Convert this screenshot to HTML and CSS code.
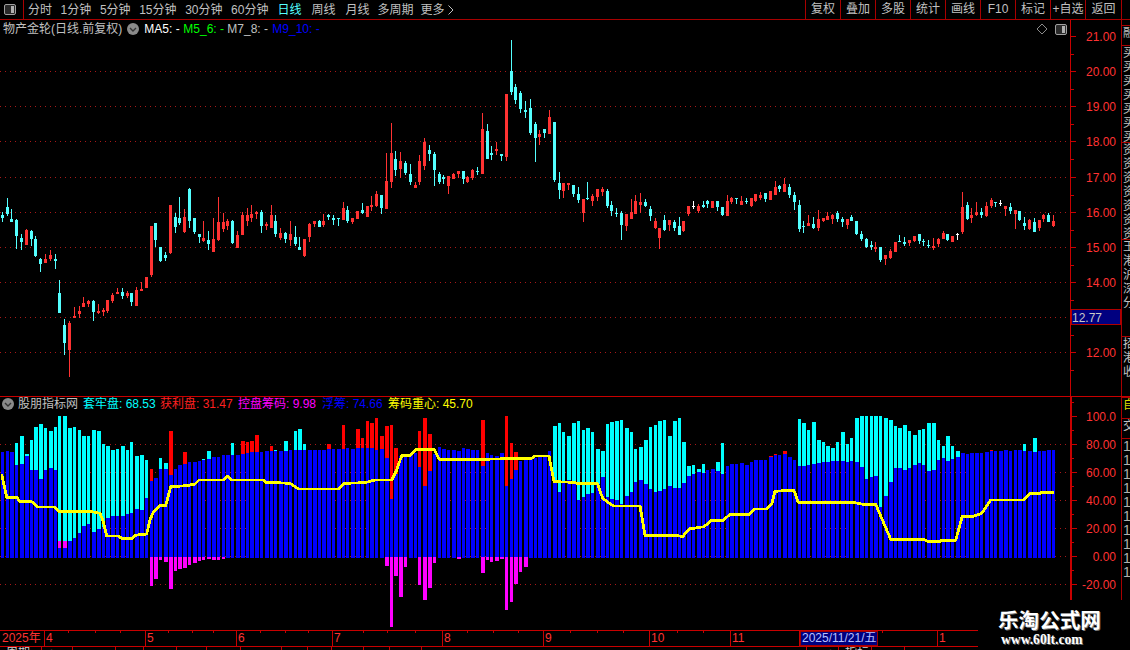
FILE: index.html
```html
<!DOCTYPE html>
<html lang="zh">
<head>
<meta charset="utf-8">
<title>物产金轮 日线</title>
<link rel="stylesheet" href="styles.css">
</head>
<body>
<div class="app">
  <header class="topbar">
    <div class="toggle-box">
      <svg class="toggle" viewBox="0 0 12 11"><rect x="0.5" y="0.5" width="11" height="10" rx="1.5" class="toggle-frame"/><rect x="7" y="2" width="3" height="7" class="toggle-fill"/></svg>
    </div>
    <nav class="periods">
      <div class="period-group minutes"><span>分时</span><span>1分钟</span><span>5分钟</span><span>15分钟</span><span>30分钟</span><span>60分钟</span></div>
      <div class="period-group days"><span class="active">日线</span><span>周线</span><span>月线</span></div>
      <div class="period-group more"><span>多周期</span><span>更多<svg class="chev" viewBox="0 0 6 10"><path d="M0.5 0.5 5 5 0.5 9.5"/></svg></span></div>
    </nav>
    <nav class="tools">
      <span>复权</span><span>叠加</span><span>多股</span><span>统计</span><span>画线</span><span>F10</span><span>标记</span><span>+自选</span><span class="last">返回</span>
    </nav>
  </header>

  <section class="pane pane-main">
    <div class="plot">
      <svg id="mainChart" class="chart" width="1121" height="376" viewBox="0 20 1121 376"></svg>
      <div class="legend legend-main">
        <span class="name">物产金轮(日线.前复权)</span>
        <svg class="roundicon" viewBox="0 0 12 12"><circle cx="6" cy="6" r="6"/><path d="M3 5 6 8 9 5"/></svg>
        <span class="ma1">MA5: -</span><span class="ma2">M5_6: -</span><span class="ma3">M7_8: -</span><span class="ma4">M9_10: -</span>
      </div>
      <svg class="diamond" viewBox="0 0 12 12"><path d="M6 1 11 6 6 11 1 6Z"/></svg>
      <svg class="toggle toggle-chart" viewBox="0 0 12 11"><rect x="0.5" y="0.5" width="11" height="10" rx="1.5" class="toggle-frame"/><rect x="7" y="2" width="3" height="7" class="toggle-fill"/></svg>
    </div>
    <aside class="side side-main" id="sideMain"></aside>
  </section>

  <section class="pane pane-ind">
    <div class="plot">
      <svg id="indChart" class="chart" width="1121" height="233" viewBox="0 397 1121 233"></svg>
      <div class="legend legend-ind">
        <svg class="roundicon" viewBox="0 0 12 12"><circle cx="6" cy="6" r="6"/><path d="M3 5 6 8 9 5"/></svg>
        <span class="name">股朋指标网</span>
        <span class="c-cyan">套牢盘: 68.53</span><span class="c-red">获利盘: 31.47</span><span class="c-mag">控盘筹码: 9.98</span><span class="c-blue">浮筹: 74.66</span><span class="c-yel">筹码重心: 45.70</span>
      </div>
    </div>
    <aside class="side side-ind" id="sideInd"></aside>
  </section>

  <footer class="timeaxis">
    <div class="months" id="months"></div>
    <div class="subrow" id="subrow"></div>
  </footer>

  <div class="watermark">
    <div class="wm-title">乐淘公式网</div>
    <div class="wm-url">www.60lt.com</div>
  </div>
</div>
<script src="app.js"></script>
</body>
</html>
```
FILE: styles.css
```css
* { box-sizing: border-box; }
html, body { margin: 0; padding: 0; background: #000; }
body { font: 12px/1 "Liberation Sans", "Noto Sans CJK SC", sans-serif; color: #c0c0c0; overflow: hidden; }
.app { position: relative; width: 1130px; height: 650px; overflow: hidden; display: flex; flex-direction: column; }

.topbar { height: 20px; flex: none; display: flex; align-items: stretch; border-bottom: 1px solid #a80000; }
.toggle-box { width: 24px; flex: none; border-right: 1px solid #a80000; display: flex; align-items: center; padding-left: 4px; }
.toggle { width: 12px; height: 11px; display: block; }
.toggle-frame { fill: #2a2a2a; stroke: #a0a0a0; stroke-width: 1; }
.toggle-fill { fill: #b0b0b0; }

.periods { display: flex; align-items: center; padding-left: 4px; white-space: nowrap; }
.period-group { display: flex; }
.minutes { gap: 8.6px; }
.days { gap: 10px; margin-left: 9px; }
.more { gap: 7px; margin-left: 8px; }
.periods .active { color: #54ffff; }
.chev { width: 6px; height: 10px; margin-left: 3px; vertical-align: -1px; fill: none; stroke: #c0c0c0; stroke-width: 1; }

.tools { margin-left: auto; margin-right: 8px; display: flex; }
.tools span { width: 35px; text-align: center; line-height: 19px; border-left: 1px solid #a80000; }
.tools .last { width: 37px; border-right: 1px solid #a80000; }

.pane { flex: none; display: flex; }
.pane-main { height: 377px; border-bottom: 1px solid #c80000; }
.pane-ind { height: 233px; }
.plot { position: relative; width: 1121px; flex: none; }
.chart { display: block; }

.legend { position: absolute; display: flex; align-items: center; white-space: nowrap; line-height: 14px; }
.legend-main { left: 3px; top: 2px; height: 14px; }
.legend-ind { left: 2px; top: 0; height: 14px; }
.roundicon { width: 12px; height: 12px; flex: none; }
.roundicon circle { fill: #8a8a8a; }
.roundicon path { fill: none; stroke: #333; stroke-width: 1.4; }
.legend-main .roundicon { margin: 0 5px 0 5px; }
.legend-ind .roundicon { margin-right: 4px; }
.legend .ma1 { color: #fff; width: 39px; }
.legend .ma2 { color: #00ff00; width: 44px; }
.legend .ma3 { color: #c0c0c0; width: 45px; }
.legend .ma4 { color: #0000ff; }
.legend .c-cyan { color: #00ffff; margin-left: 5px; width: 77px; }
.legend .c-red { color: #ff2020; width: 78px; }
.legend .c-mag { color: #ff00ff; width: 84px; }
.legend .c-blue { color: #0000ff; width: 66px; }
.legend .c-yel { color: #ffff00; }

.diamond { position: absolute; left: 1036px; top: 3px; width: 12px; height: 12px; fill: none; stroke: #8a8a8a; stroke-width: 1; }
.toggle-chart { position: absolute; left: 1055px; top: 4px; }

.side { width: 9px; flex: none; display: flex; flex-direction: column; overflow: hidden; border-left: 1px solid #a80000; }
.side-cell { border-top: 1px solid #a80000; overflow: hidden; padding-left: 1px; flex: none; }
.side-cell.blank { border-top: 0; }
.side-cell div { height: 14px; line-height: 14px; width: 14px; font-size: 12px; }
.side-cell.note { color: #dcdc00; }
.side-main { height: 376px; }
.side-ind { height: 203px; }
.side-nums div { font-size: 14px; color: #b0b0b0; }

/* chart marks */
.grid { stroke: #a81818; stroke-width: 1; stroke-dasharray: 1 4; shape-rendering: crispEdges; fill: none; }
.wick-r { fill: #ff3232; }
.wick-c, .body-c { fill: #54ffff; }
.wick-w, .body-w { fill: #ffffff; }
.body-r { fill: none; stroke: #ff3232; stroke-width: 1; shape-rendering: crispEdges; }
.crisp { shape-rendering: crispEdges; }
.bar-c { fill: #00ffff; }
.bar-r { fill: #ff0000; }
.bar-m { fill: #ff00ff; }
.bar-b { fill: #0000ff; }
.avg { fill: none; stroke: #ffff00; stroke-width: 2.8; shape-rendering: crispEdges; stroke-linejoin: round; }
.axis-thin { stroke: #c80000; stroke-width: 1; shape-rendering: crispEdges; }
.axis-thick { stroke: #c80000; stroke-width: 2; shape-rendering: crispEdges; }
.label { fill: #ff3232; font: 12px "Liberation Sans", sans-serif; text-anchor: end; }
.price-box { fill: #000080; stroke: #b00000; stroke-width: 1; shape-rendering: crispEdges; }
.price-text { fill: #c8c8c8; font: 12px "Liberation Sans", sans-serif; }

/* time axis */
.timeaxis { position: relative; height: 20px; flex: none; border-top: 1px solid #c80000; }
.months { display: flex; height: 16px; border-bottom: 1px solid #c80000; }
.month { flex: none; color: #ff3232; line-height: 15px; padding-left: 1px; border-right: 1px solid #c80000; white-space: nowrap; overflow: hidden; }
.month.first { padding-left: 2px; }
.month.current { background: #000080; color: #b8c0ff; outline: 1px solid #a00000; outline-offset: -1px; padding-left: 2px; }
.tick { position: absolute; top: 0; width: 1px; height: 2px; background: #c80000; }
.subrow { display: flex; height: 3px; overflow: hidden; }
.subcell { flex: none; border-right: 1px solid #c80000; line-height: 12px; padding-left: 6px; color: #d0d0d0; white-space: nowrap; overflow: hidden; }
.subcell.tail { padding-left: 20px; }

/* overlay */
.watermark { position: absolute; left: 978px; top: 600px; width: 152px; height: 50px; background: #000; display: flex; flex-direction: column; align-items: flex-start; padding-left: 20px; }
.wm-title { margin-top: 8px; font: 700 20.6px/22px "Noto Sans CJK SC", sans-serif; color: #fff; text-shadow: 1px 1px 0 #777; white-space: nowrap; }
.wm-url { margin: 2px 0 0 3px; font: 700 13.6px/16px "Liberation Serif", serif; color: #fff; text-shadow: 1px 1px 0 #666; white-space: nowrap; }
```
FILE: app.js
```js
(function () {
  // ---------- Daily candles: type + hi,top,bottom,lo, in 3x pixel units from a y origin ----------
  var candleSegs = [
    [190, "c68,75,84,98 c25,52,72,78 c57,87,96,96 c87,90,138,177 c133,144,156,180 r118,120,165,165 c120,123,147,168 c139,147,199,201 c205,207,222,246 r193,207,219,219 r180,195,207,213 c193,207,213,237 c270,309,369,369 c387,405,459,495 r393,399,480,561 r351,378,381,381 r348,363,372,384 r321,339,351,351 r330,333,342,351 c330,333,366,393 r342,363,369,372 r354,360,366,378 r330,330,363,369 r309,315,333,339 r294,306,312,312 c294,306,318,327 r303,309,318,324 c309,309,336,348 r291,300,348,348 r276,297,303,303 r261,261,294,294 r108,108,255,261 c99,99,150,171 c171,171,213,216 c186,195,204,213 r45,45,189,192 c69,81,111,129 c21,84,99,105 r57,81,126,129 c-6,-3,93,114 c84,84,126,132 c132,132,141,159 r93,144,153,156 c123,150,162,180 r84,147,186,186 r21,96,150,153 r69,96,117,126 r87,93,108,120 c90,93,159,162 r123,135,174,174"],
    [40, "r516,525,585,585 r504,525,543,558 r495,522,534,546 r513,516,522,537 c510,516,558,579 r546,552,558,570 r495,525,564,564 c525,543,582,591 r564,579,594,600 c576,579,597,609 r543,582,600,618 c558,591,612,618 c591,621,630,630 r597,597,648,651 r549,552,591,606 r543,543,552,561 c540,543,561,561 r522,543,555,561 c522,525,531,540 c525,534,540,555 c534,534,537,558 r486,504,540,540 c498,510,543,549 r534,534,546,552 r513,513,537,537 c489,510,519,522 r498,498,531,531 r468,495,501,513 r453,462,498,501 c465,465,504,522 r339,423,507,507 r249,339,426,444 c333,357,390,408 r336,363,387,414 c363,369,399,405 c372,402,426,435 r426,435,444,444 r345,363,426,435 r294,306,378,390 c315,330,342,363 c336,342,390,438 c396,402,426,432 c405,411,417,432 r408,408,438,462 r399,402,417,417 r393,393,402,414 c393,393,417,432 r408,411,426,429 r387,390,414,420 c381,393,396,405 r219,267,402,402 c252,273,357,357 c318,339,345,360 r306,327,333,345 c342,342,348,363 r162,162,351,363 c0,93,156,165 c132,141,180,192 c153,159,207,219 c183,210,216,234 c177,204,279,285 c246,252,294,366 r270,282,291,315 c267,267,279,294 r210,231,282,282 c246,246,420,426 c396,429,450,477"],
    [160, "r69,69,93,114 r69,69,75,90 c75,75,102,111 c81,102,120,129 r117,117,159,186 c66,114,117,120 r102,108,123,138 r87,87,111,123 r81,87,96,108 c87,93,138,144 c123,135,153,168 c144,159,162,171 c153,159,195,240 r162,162,198,213 r117,156,177,177 r105,123,162,162 r99,126,135,159 c117,126,138,141 c138,147,168,183 r174,183,204,207 r204,204,234,267 c165,180,210,213 r180,180,195,213 c180,186,204,213 c171,198,225,225 r183,183,213,216 r138,138,162,168 w123,138,141,147 r132,138,153,159 c123,135,141,144 c120,123,132,144 r123,123,144,144 c123,123,141,153 c141,141,165,168 r105,123,168,168 r111,114,126,132 c114,114,117,132 r108,123,135,135 c114,123,126,132 r114,114,138,141 r102,102,123,126 r96,105,114,120 c99,99,117,126 r93,93,120,120 r63,81,105,105 c75,78,87,96 r54,72,96,96 c72,81,105,114 c96,105,126,150 c120,135,207,216 c183,198,201,219 r165,189,198,198 c171,192,204,207 r150,177,204,213 r174,174,183,186 r156,168,180,180 r162,165,177,192 c153,159,177,186 c171,177,186,201 r177,177,195,207 c165,171,183,183 c183,183,222,225 c213,222,237,243 c234,237,261,264 c243,255,261,270 r246,261,264,276 c261,261,300,306 r285,285,297,315 r267,273,294,297 r246,246,276,276 c225,243,246,246 c231,246,252,258 r240,240,249,258 r228,228,243,246 c222,222,243,252 c237,243,246,258 c240,255,258,264 r234,258,264,270 r234,237,252,261 r213,219,237,237 c222,222,240,243 r228,228,246,246 w219,222,225,240 r96,141,216,222 c126,135,177,180 r144,165,174,189 r126,156,165,168 c144,156,165,174 r126,138,168,171 r114,120,138,144 c126,126,129,141 w120,129,132,138 r138,138,147,168 c129,141,153,162 r150,150,162,207 c153,153,180,183 c171,189,198,210 r177,180,207,210 c174,186,216,216 r180,180,204,213 r162,165,177,186 c159,165,186,186 r165,183,198,201"]
  ];

  // ---------- Indicator bars: blue top, or colour+colourTop,blueTop ----------
  var barSegs = [
    [390, "186 184 188 c160,225 c138,222 c192,200 c150,240 c113,240 c102,268 c116,240 c125,234 c113,242 c78,474 c80,474 c115,453 c113,444 c122,429 c138,408 c140,402 c122,426 c125,417 c163,411 c170,384 c180,378 c177,378 c168,378 c180,372 c157,369 c200,357 c197,360 c210,324 r238,273 265 c205,238 c220,238 r124,255 238 225 r187,222 216 217 215 c208,212 c184,207 203 201 197 197 c160,197 195 r153,192 r157,190 r153,188 r135,187 187 185 r168,185 c180,184 184 c153,183 182 c124,180 c117,180 c162,180 180 181 180 180 r164,177 178 177 r105,177 176 177 r117,175 r145,175 r95,174 r100,174 r85,180 r140,178 r110,205 r105,327 r175,253 200 197 193 190 r125,233 r85,288 r132,245 193 172 178 181 180 183 175 178 182 180"],
    [390, "r90,228 190 196 198 190 r78,290 r160,268 r186,240 215 210 208 205 200 195 183 c108,278 c100,306 c127,277 c138,270 c100,280 c94,332 c120,322 c115,313 c126,310 c178,283 c183,262 c104,322 c96,327 c94,330 c90,342 c115,320 c127,308 c178,277 c173,272 c150,282 c113,297 c106,307 c93,303 c90,298 c138,290 c95,296 c85,296 c158,280 c228,258 c226,252 c238,248 c223,250 240 237 c216,245 c160,252 228 222 224 221 225 218 210 212 212 r198,202 r192,197 197 r184,192 202 210"],
    [400, "c57,200 c70,198 c90,195 c66,192 c120,190 c128,186 c138,186 c145,183 c127,183 c96,183 c133,187 c114,183 c55,186 c50,203 c48,238 c48,232 c48,230 c48,322 c54,288 c60,248 c80,205 c85,205 c76,212 c93,205 c106,195 c90,190 c88,197 c70,215 c70,212 c120,180 c140,175 c110,185 c140,178 c155,173 160 163 160 160 160 157 r152,155 154 155 150 153 150 152 c132,155 155 c115,158 154 153 151 150"]
  ];

  var negs = [
    [520, { 31:198,32:177,33:120,34:126,35:207,36:155,37:147,38:144,39:137,40:131,41:125,42:122,43:117,44:120,45:120,46:117,80:140,81:323,82:170,83:231,84:143,87:195,88:240,89:204,90:129,95:117 }],
    [390, { 100:551,101:512,102:516,103:515,104:507,105:662,106:636,107:582,108:548,109:533 }]
  ];

  // ---------- Cost-centre line: x origin, y origin, points at 3x ----------
  var avgSegs = [
    [0, 390, [5,253, 20,322, 50,322, 60,335, 95,335, 112,351, 165,351, 175,364, 270,364, 300,370, 310,395]],
    [0, 520, [320,48, 355,48, 365,55, 398,55, 405,46, 440,42, 450,0]],
    [0, 390, [458,370, 480,347, 497,347, 512,290, 560,287, 585,282, 597,270, 670,270, 682,258, 695,270, 790,270, 797,277, 870,280, 895,297, 1015,297, 1032,280, 1095,278, 1125,270, 1175,270, 1190,240, 1205,197, 1230,197, 1247,178, 1302,178, 1318,208, 1440,208]],
    [480, 390, [155,205, 165,198, 207,198, 222,275, 285,277, 290,280, 352,280, 368,325, 400,348, 480,348, 495,436, 590,436, 608,440, 627,417, 672,410, 695,391, 730,391, 750,373, 808,373, 825,357, 860,357, 875,342, 885,304]],
    [780, 400, [15,272, 42,272, 55,307, 220,307, 250,313, 287,313, 332,418, 432,418, 445,425, 480,425, 484,421, 527,421, 547,349, 578,349, 605,340, 632,300, 730,300, 752,280, 780,280, 785,277, 822,277]]
  ];

  function rect(cls, x, y, w, h) {
    return '<rect class="' + cls + '" x="' + x + '" y="' + y + '" width="' + w + '" height="' + Math.max(h, 1) + '"/>';
  }
  function line(cls, x1, y1, x2, y2) {
    return '<line class="' + cls + '" x1="' + x1 + '" y1="' + y1 + '" x2="' + x2 + '" y2="' + y2 + '"/>';
  }
  function cx(i) { return Math.floor(2.3 + 4.8 * i); }

  // ---------- Main chart ----------
  var m = '';
  [71, 106, 141, 177, 212, 247, 282, 317, 352].forEach(function (y) {
    m += line('grid', 0, y + 0.5, 1070, y + 0.5);
  });

  var idx = 0;
  candleSegs.forEach(function (seg) {
    seg[1].split(' ').forEach(function (tok) {
      var t = tok.charAt(0);
      var v = tok.slice(1).split(',').map(function (n) { return Math.floor(seg[0] + Number(n) / 3); });
      var x = cx(idx);
      if (v[3] > v[0]) m += rect('crisp wick-' + t, x, v[0], 1, v[3] - v[0]);
      if (t === 'r') {
        m += '<rect class="body-r" x="' + (x - 0.5) + '" y="' + (v[1] + 0.5) + '" width="2" height="' + Math.max(v[2] - v[1] - 1, 1) + '"/>';
      } else {
        m += rect('crisp body-' + t, x - 1, v[1], 3, v[2] - v[1]);
      }
      idx++;
    });
  });

  // axis
  m += line('axis-thin', 1070.5, 20, 1070.5, 396);
  [[21, 36], [20, 71], [19, 106], [18, 141], [17, 177], [16, 212], [15, 247], [14, 282], [13, 317], [12, 352]].forEach(function (p) {
    m += line('axis-thin', 1071, p[1] + 0.5, 1076, p[1] + 0.5);
    m += line('axis-thin', 1071, p[1] + 18, 1074, p[1] + 18);
    if (p[0] !== 13) m += '<text class="label" x="1116" y="' + (p[1] + 5) + '">' + p[0] + '.00</text>';
  });
  m += '<rect class="price-box" x="1071.5" y="309.5" width="49" height="15"/>';
  m += '<text class="price-text" x="1072" y="322">12.77</text>';
  document.getElementById('mainChart').innerHTML = m;

  // ---------- Indicator chart ----------
  var s = '';
  [444, 472, 500, 528, 556, 584].forEach(function (y) {
    s += line('grid', 0, y + 0.5, 1070, y + 0.5);
  });

  var bi = 0;
  function bx(i) { return Math.floor(1.2 + 4.8 * i + 0.001); }
  function bw(i) { return Math.min(bx(i + 1) - bx(i) - 1, i % 3 === 0 ? 3 : 4); }
  var BASE = 558;
  barSegs.forEach(function (seg) {
    seg[1].split(' ').forEach(function (tok) {
      var hasColor = /[cr]/.test(tok.charAt(0));
      var nums = (hasColor ? tok.slice(1) : tok).split(',').map(function (n) { return Math.floor(seg[0] + Number(n) / 3); });
      var blue = hasColor ? nums[1] : nums[0];
      if (hasColor) s += rect('crisp bar-' + tok.charAt(0), bx(bi), nums[0], bw(bi), blue - nums[0] + 1);
      s += rect('crisp bar-b', bx(bi), blue, bw(bi), BASE - blue);
      bi++;
    });
  });
  negs.forEach(function (seg) {
    Object.keys(seg[1]).forEach(function (k) {
      var i = Number(k);
      var y2 = Math.floor(seg[0] + seg[1][k] / 3);
      s += rect('crisp bar-m', bx(i), BASE - 1, bw(i), y2 - BASE + 1);
    });
  });
  [12, 13].forEach(function (i) { s += rect('crisp bar-m', bx(i), 541, bw(i), 7); });

  var pts = [];
  avgSegs.forEach(function (seg) {
    for (var j = 0; j < seg[2].length; j += 2) {
      pts.push((seg[0] + seg[2][j] / 3).toFixed(1) + ',' + (seg[1] + seg[2][j + 1] / 3).toFixed(1));
    }
  });
  s += '<polyline class="avg" points="' + pts.join(' ') + '"/>';

  s += line('axis-thick', 1071, 397, 1071, 600);
  [['100.0', 416], ['80.00', 444], ['60.00', 472], ['40.00', 500], ['20.00', 528], ['0.00', 556], ['-20.00', 584]].forEach(function (p) {
    s += line('axis-thin', 1071, p[1] + 0.5, 1077, p[1] + 0.5);
    if (p[1] < 584) s += line('axis-thin', 1071, p[1] + 14.5, 1074, p[1] + 14.5);
    s += '<text class="label" x="1116" y="' + (p[1] + 5) + '">' + p[0] + '</text>';
  });
  s += line('axis-thin', 1071, 402.5, 1074, 402.5);
  document.getElementById('indChart').innerHTML = s;

  // ---------- Side strip ----------
  function sideCell(text, h, extra) {
    var inner = text.split('').map(function (c) { return '<div>' + c + '</div>'; }).join('');
    return '<div class="side-cell ' + (extra || '') + '" style="height:' + h + 'px">' + inner + '</div>';
  }
  document.getElementById('sideMain').innerHTML =
    sideCell('', 5, 'blank') + sideCell('融', 20) + sideCell('买买买买买买买', 97) +
    sideCell('资资资资资资资', 97) + sideCell('王港沪深分', 97) + sideCell('招港收', 60);
  document.getElementById('sideInd').innerHTML =
    sideCell('自', 21, 'note') + sideCell('交', 20) + sideCell('1111111111', 162, 'side-nums');

  // ---------- Time axis ----------
  var months = [
    ['2025年', 45, 'first'], ['4', 101], ['5', 91], ['6', 96], ['7', 110], ['8', 101], ['9', 106],
    ['10', 81], ['11', 69], ['2025/11/21/五', 78, 'current'], ['', 60], ['1', 41]
  ];
  var mh = months.map(function (c) {
    return '<div class="month ' + (c[2] || '') + '" style="width:' + c[1] + 'px">' + c[0] + '</div>';
  }).join('');
  [68, 95, 120, 168, 192, 213, 260, 285, 308, 363, 387, 415, 467, 493, 518, 570, 597, 623, 677, 703, 882].forEach(function (x) {
    mh += '<span class="tick" style="left:' + x + 'px"></span>';
  });
  document.getElementById('months').innerHTML = mh;

  var sub = [['周期', 42], ['+', 31], ['', 43], ['', 28], ['', 33], ['', 30], ['', 34], ['', 41], ['', 26], ['', 24], ['', 32], ['', 26], ['', 32], ['', 385], ['+', 32, 'tail'], ['指标', 33], ['', 33]];
  document.getElementById('subrow').innerHTML = sub.map(function (c) {
    return '<div class="subcell ' + (c[2] || '') + '" style="width:' + c[1] + 'px">' + c[0] + '</div>';
  }).join('');
})();
```
